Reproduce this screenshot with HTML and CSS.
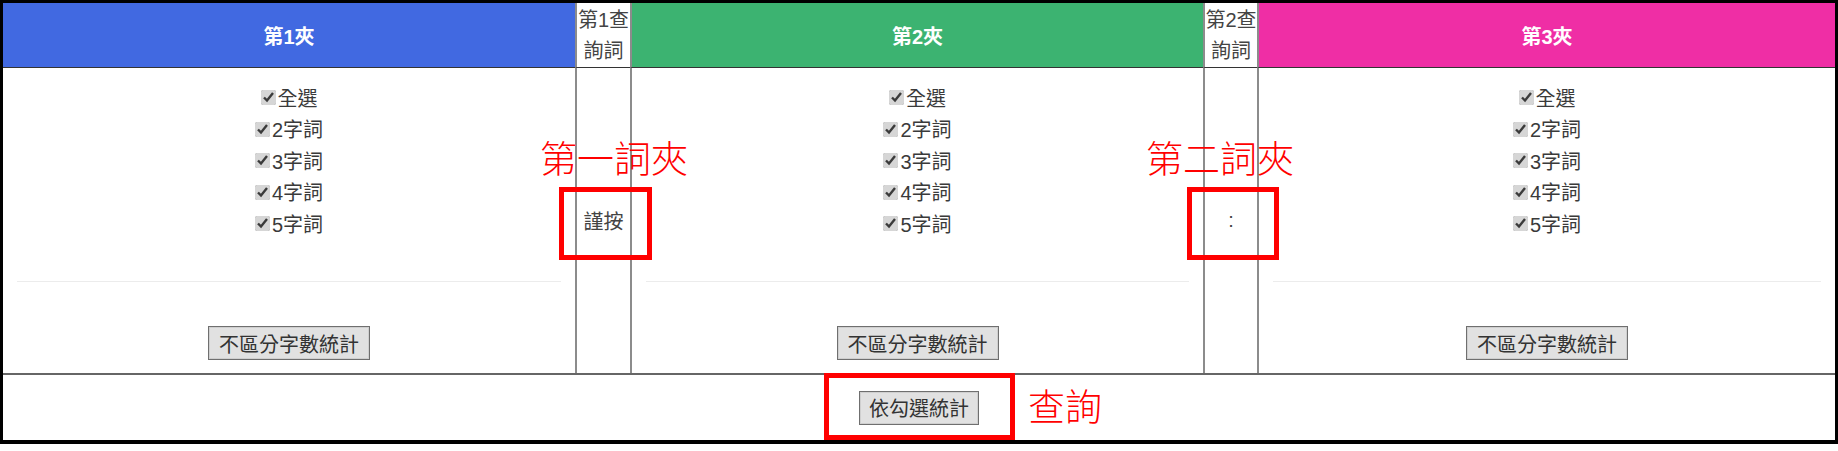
FILE: index.html
```html
<!DOCTYPE html>
<html lang="zh-Hant">
<head>
<meta charset="utf-8">
<title>詞夾統計</title>
<link rel="stylesheet" href="styles.css">
</head>
<body>
<div class="frame">
  <div class="grid">
    <div class="head head-blue">第1夾</div>
    <div class="head head-query sep">第1查<br>詢詞</div>
    <div class="head head-green sep">第2夾</div>
    <div class="head head-query sep">第2查<br>詢詞</div>
    <div class="head head-pink sep">第3夾</div>

    <div class="col">
      <ul class="checks">
        <li><label><input type="checkbox" checked>全選</label></li>
        <li><label><input type="checkbox" checked>2字詞</label></li>
        <li><label><input type="checkbox" checked>3字詞</label></li>
        <li><label><input type="checkbox" checked>4字詞</label></li>
        <li><label><input type="checkbox" checked>5字詞</label></li>
      </ul>
      <hr class="rule">
      <button class="btn" type="button">不區分字數統計</button>
    </div>
    <div class="query sep">謹按</div>
    <div class="col sep">
      <ul class="checks">
        <li><label><input type="checkbox" checked>全選</label></li>
        <li><label><input type="checkbox" checked>2字詞</label></li>
        <li><label><input type="checkbox" checked>3字詞</label></li>
        <li><label><input type="checkbox" checked>4字詞</label></li>
        <li><label><input type="checkbox" checked>5字詞</label></li>
      </ul>
      <hr class="rule">
      <button class="btn" type="button">不區分字數統計</button>
    </div>
    <div class="query sep">:</div>
    <div class="col sep">
      <ul class="checks">
        <li><label><input type="checkbox" checked>全選</label></li>
        <li><label><input type="checkbox" checked>2字詞</label></li>
        <li><label><input type="checkbox" checked>3字詞</label></li>
        <li><label><input type="checkbox" checked>4字詞</label></li>
        <li><label><input type="checkbox" checked>5字詞</label></li>
      </ul>
      <hr class="rule">
      <button class="btn" type="button">不區分字數統計</button>
    </div>

    <div class="footer">
      <button class="btn" type="button">依勾選統計</button>
    </div>
  </div>

  <div class="note note-1">第一詞夾</div>
  <div class="mark mark-1"></div>
  <div class="note note-2">第二詞夾</div>
  <div class="mark mark-2"></div>
  <div class="mark mark-3"></div>
  <div class="note note-3">查詢</div>
</div>
</body>
</html>
```

FILE: styles.css
```css
html, body {
  margin: 0;
  padding: 0;
  background: #fff;
}

body {
  font-family: "Liberation Sans", "Noto Sans CJK TC", sans-serif;
  font-size: 20px;
  color: #3a3a3a;
}

.frame {
  position: relative;
  width: 1838px;
  box-sizing: border-box;
  border: 3px solid #000;
  border-bottom-width: 4px;
  background: #fff;
}

.grid {
  display: grid;
  grid-template-columns: 572px 55px 573px 54px 1fr;
  grid-template-rows: 65px auto auto;
}

.sep {
  border-left: 2px solid #8c8c8c;
}

.head {
  box-sizing: border-box;
  border-bottom: 1px solid #333;
  display: flex;
  align-items: center;
  justify-content: center;
  text-align: center;
  color: #fff;
  font-weight: bold;
}

.head-blue { background: #4169e1; }
.head-green { background: #3cb371; }
.head-pink { background: #ef2ea5; }

.head-query {
  background: #fff;
  color: #444;
  font-weight: normal;
  line-height: 31px;
  padding-top: 2px;
}

.col {
  box-sizing: border-box;
  display: flex;
  flex-direction: column;
  align-items: center;
  padding: 15px 0 13px;
}

.checks {
  list-style: none;
  margin: 0;
  padding: 0;
  text-align: center;
  line-height: 31px;
  height: 155px;
}

.checks label {
  display: inline-flex;
  align-items: center;
}

.checks input {
  width: 15px;
  height: 15px;
  margin: 0 2px 3px 0;
  accent-color: #d6d6d6;
}

.rule {
  align-self: stretch;
  margin: 43px 14px 0;
  border: 0;
  border-top: 1px solid #ececec;
  height: 0;
}

.btn {
  margin-top: 44px;
  height: 34px;
  padding: 0 10px;
  font-family: "Liberation Sans", "Noto Sans CJK TC", sans-serif;
  font-size: 20px;
  color: #333;
  background: #e1e1e1;
  border: 1px solid #6f6f6f;
  border-radius: 0;
  box-shadow: inset 0 0 0 1px #cfcfcf;
}

.query {
  display: flex;
  align-items: center;
  justify-content: center;
  color: #444;
}

.footer {
  grid-column: 1 / -1;
  height: 67px;
  box-sizing: border-box;
  border-top: 2px solid #666;
  display: flex;
  align-items: center;
  justify-content: center;
}

.footer .btn {
  margin-top: 0;
  padding: 0 9px;
}

.note {
  position: absolute;
  color: #ff0000;
  font-family: "Noto Sans CJK TC", sans-serif;
  font-weight: 300;
  font-size: 37px;
  line-height: 37px;
  white-space: nowrap;
}

.note-1 { left: 537px; top: 136px; }
.note-2 { left: 1143px; top: 136px; }
.note-3 { left: 1025px; top: 384px; }

.mark {
  position: absolute;
  box-sizing: border-box;
  border: 5px solid #ff0000;
}

.mark-1 { left: 556px; top: 184px; width: 93px; height: 73px; }
.mark-2 { left: 1184px; top: 184px; width: 92px; height: 73px; }
.mark-3 { left: 821px; top: 370px; width: 191px; height: 67px; }
```
